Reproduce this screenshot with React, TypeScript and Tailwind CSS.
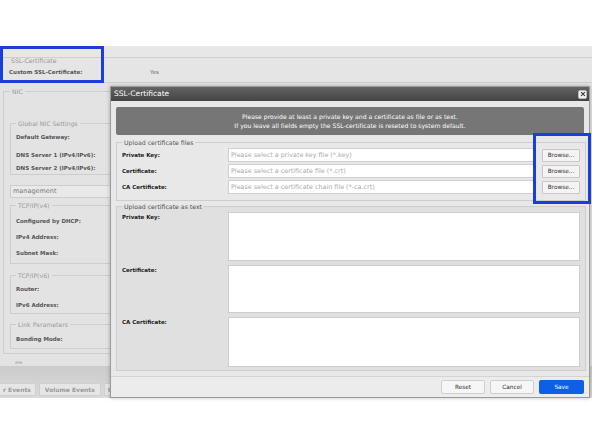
import React from 'react';

const Field = ({ legend, className, children }: { legend: string; className?: string; children?: React.ReactNode }) => (
  <fieldset className={`border border-[#cdcdcd] ${className ?? ''}`}>
    <legend className="px-[2px] text-[6.2px] leading-[7px] text-[#9a9a9a]">{legend}</legend>
    {children}
  </fieldset>
);

const Lbl = ({ children, className }: { children: React.ReactNode; className?: string }) => (
  <div className={`text-[5.5px] font-bold leading-[7px] text-[#555] ${className ?? ''}`}>{children}</div>
);

const Tab = ({ children, className }: { children: React.ReactNode; className?: string }) => (
  <div className={`border border-[#cfcfcf] bg-[#e6e6e6] text-[6px] font-bold leading-[11px] text-[#9a9a9a] ${className ?? ''}`}>
    {children}
  </div>
);

const PageBehind = () => (
  <div className="flex h-[352px] flex-col bg-[#e3e3e3]">
    <div className="h-[12px] border-b border-[#d0d0d0] bg-[#e7e7e7]" />
    <div className="h-[25px] border-b border-[#d0d0d0] bg-[#e5e5e5] pl-[9px]">
      <div className="pl-[2px] text-[6.2px] leading-[6px] text-[#9a9a9a]">SSL-Certificate</div>
      <div className="mt-[5px] flex">
        <Lbl className="w-[141px]">Custom SSL-Certificate:</Lbl>
        <div className="text-[5.5px] leading-[7px] text-[#666]">Yes</div>
      </div>
    </div>
    <div className="flex flex-1 flex-col">
      <Field legend="NIC" className="ml-[3px] mt-[5px] h-[266px] w-[300px] pl-[6px]">
        <Field legend="Global NIC Settings" className="mt-[25px] h-[55px] w-[290px] pl-[5px]">
          <Lbl className="mt-[7px]">Default Gateway:</Lbl>
          <Lbl className="mt-[11px]">DNS Server 1 (IPv4/IPv6):</Lbl>
          <Lbl className="mt-[6px]">DNS Server 2 (IPv4/IPv6):</Lbl>
        </Field>
        <div className="mt-[10px] h-[13px] w-[292px] border border-[#cdcdcd] bg-[#e9e9e9] pl-[2px] text-[6.5px] leading-[11px] text-[#777]">
          management
        </div>
        <Field legend="TCP/IP(v4)" className="mt-[4px] h-[62px] w-[290px] pl-[5px]">
          <Lbl className="mt-[9px]">Configured by DHCP:</Lbl>
          <Lbl className="mt-[9px]">IPv4 Address:</Lbl>
          <Lbl className="mt-[9px]">Subnet Mask:</Lbl>
        </Field>
        <Field legend="TCP/IP(v6)" className="mt-[8px] h-[42px] w-[290px] pl-[5px]">
          <Lbl className="mt-[7px]">Router:</Lbl>
          <Lbl className="mt-[9px]">IPv6 Address:</Lbl>
        </Field>
        <Field legend="Link Parameters" className="mt-[7px] h-[28px] w-[290px] pl-[5px]">
          <Lbl className="mt-[8px]">Bonding Mode:</Lbl>
        </Field>
      </Field>
      <div className="ml-[15px] mt-[7px] text-[3.5px] leading-[5px] text-[#888]">IPMI</div>
      <div className="mt-auto flex h-[32px] items-start gap-[3px] bg-gradient-to-b from-[#cbcbcb] to-[#dadada] pt-[17px]">
        <Tab className="-ml-[6px] pl-[8px] pr-[4px]">r Events</Tab>
        <Tab className="px-[5px]">Volume Events</Tab>
        <Tab className="px-[3px]">Co</Tab>
      </div>
    </div>
  </div>
);

const FileRow = ({ label, placeholder }: { label: string; placeholder: string }) => (
  <div className="flex h-[16px] items-center">
    <div className="w-[106px] text-[5.5px] font-bold leading-[7px] text-[#222]">{label}</div>
    <div className="h-[14px] w-[306px] border border-[#cfcfcf] bg-white pl-[2px] text-[6.4px] leading-[12px] text-[#aaa]">
      {placeholder}
    </div>
    <div className="ml-[8px] h-[13px] w-[38px] rounded-[1px] border border-[#c8c8c8] bg-[#f4f4f4] text-center text-[5.8px] leading-[11px] text-[#333]">
      Browse...
    </div>
  </div>
);

const TextRow = ({ label, h }: { label: string; h: string }) => (
  <div className={`flex ${h}`}>
    <div className="w-[106px] pt-[2px] text-[5.5px] font-bold leading-[7px] text-[#222]">{label}</div>
    <div className="h-full w-[352px] border border-[#cdcdcd] bg-white" />
  </div>
);

const Modal = () => (
  <div className="absolute left-[110px] top-[86px] flex h-[312px] w-[480px] flex-col border border-[#9a9a9a] bg-[#e8e8e8] font-['DejaVu_Sans',sans-serif] shadow-[0_0_4px_rgba(0,0,0,0.25)]">
    <div className="flex h-[14px] items-center justify-between bg-gradient-to-b from-[#636363] to-[#444] pl-[3px] pr-[2px]">
      <span className="text-[7.5px] leading-[14px] text-white">SSL-Certificate</span>
      <span className="flex h-[9px] w-[9px] items-center justify-center rounded-[2px] border border-[#bbb] bg-[#f2f2f2]">
        <svg viewBox="0 0 8 8" className="h-[6px] w-[6px]">
          <path d="M1.5 1.5 L6.5 6.5 M6.5 1.5 L1.5 6.5" stroke="#333" strokeWidth="1.4" />
        </svg>
      </span>
    </div>
    <div className="flex flex-col px-[5px] pb-[5px] pt-[6px]">
      <div className="flex h-[28px] flex-col items-center justify-center rounded-[2px] bg-[#767676] text-[6.1px] leading-[9px] text-white">
        <div>Please provide at least a private key and a certificate as file or as text.</div>
        <div>If you leave all fields empty the SSL-certificate is reseted to system default.</div>
      </div>
      <fieldset className="mt-[4px] h-[62px] border border-[#cdcdcd] px-[5px]">
        <legend className="px-[2px] text-[6.2px] leading-[7px] text-[#555]">Upload certificate files</legend>
        <div className="pt-[1px]">
          <FileRow label="Private Key:" placeholder="Please select a private key file (*.key)" />
          <FileRow label="Certificate:" placeholder="Please select a certificate file (*.crt)" />
          <FileRow label="CA Certificate:" placeholder="Please select a certificate chain file (*-ca.crt)" />
        </div>
      </fieldset>
      <fieldset className="mt-[2px] flex h-[168px] flex-col gap-[4px] border border-[#cdcdcd] bg-[#e0e0e0] px-[5px] pb-[2px] pt-[2px]">
        <legend className="px-[2px] text-[6.2px] leading-[7px] text-[#555]">Upload certificate as text</legend>
        <TextRow label="Private Key:" h="h-[49px]" />
        <TextRow label="Certificate:" h="h-[48px]" />
        <TextRow label="CA Certificate:" h="h-[50px]" />
      </fieldset>
    </div>
    <div className="flex flex-1 items-start justify-end gap-[5px] border-t border-[#d4d4d4] bg-[#ececec] pr-[5px] pt-[3px]">
      <div className="h-[14px] w-[44px] rounded-[2px] border border-[#cfcfcf] bg-[#f6f6f6] text-center text-[5.8px] leading-[12px] text-[#333]">Reset</div>
      <div className="h-[14px] w-[44px] rounded-[2px] border border-[#cfcfcf] bg-[#f6f6f6] text-center text-[5.8px] leading-[12px] text-[#333]">Cancel</div>
      <div className="h-[14px] w-[45px] rounded-[2px] bg-[#0d5fe6] text-center text-[5.8px] leading-[14px] text-white">Save</div>
    </div>
  </div>
);

export default function App() {
  return (
    <div className="relative h-[444px] w-[592px] overflow-hidden bg-white font-['DejaVu_Sans',sans-serif]">
      <div className="h-[46px]" />
      <div className="relative h-[352px] overflow-hidden">
        <PageBehind />
      </div>
      <Modal />
      <div className="absolute left-0 top-[46px] h-[37px] w-[104px] border-[3px] border-[#1b3ed8]" />
      <div className="absolute left-[533px] top-[133px] h-[71px] w-[58px] border-[3px] border-[#1b3ed8]" />
    </div>
  );
}
